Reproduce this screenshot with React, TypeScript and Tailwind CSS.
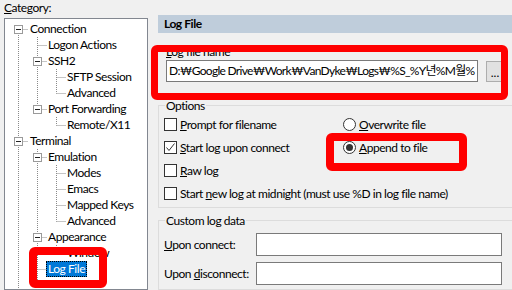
import React from "react";

// tree rows shown in the Category pane
interface TreeRow {
  label: string;
  level: number;
  box?: boolean;
  selected?: boolean;
}

const rows: TreeRow[] = [
  { label: "Connection", level: 0, box: true },
  { label: "Logon Actions", level: 1 },
  { label: "SSH2", level: 1, box: true },
  { label: "SFTP Session", level: 2 },
  { label: "Advanced", level: 2 },
  { label: "Port Forwarding", level: 1, box: true },
  { label: "Remote/X11", level: 2 },
  { label: "Terminal", level: 0, box: true },
  { label: "Emulation", level: 1, box: true },
  { label: "Modes", level: 2 },
  { label: "Emacs", level: 2 },
  { label: "Mapped Keys", level: 2 },
  { label: "Advanced", level: 2 },
  { label: "Appearance", level: 1, box: true },
  { label: "Window", level: 2 },
  { label: "Log File", level: 1, selected: true },
];

const indent = ["pl-[23px]", "pl-[41px]", "pl-[60px]"];
const lineX = [13.5, 32.5, 51.5];

function TreeLines() {
  const dots = { stroke: "#8a8a8a", strokeWidth: 1, strokeDasharray: "1 1" };
  const verticals: [number, number, number][] = [
    [lineX[0], 10, 290],
    [lineX[1], 18, 90.5],
    [lineX[1], 130, 290],
    [lineX[2], 50, 74.5],
    [lineX[2], 98, 106.5],
    [lineX[2], 146, 202.5],
    [lineX[2], 226, 234.5],
  ];
  return (
    <svg className="absolute left-0 top-0 pointer-events-none" width={142} height={290}>
      {verticals.map(([x, y1, y2], i) => (
        <line key={"v" + i} x1={x} x2={x} y1={y1} y2={y2} {...dots} />
      ))}
      {rows.map((r, i) => {
        const y = 10.5 + 16 * i;
        const x = lineX[r.level];
        return <line key={"h" + i} x1={x} x2={x + 9} y1={y} y2={y} {...dots} />;
      })}
      {rows.map((r, i) => {
        if (!r.box) return null;
        const cx = lineX[r.level] - 0.5;
        const cy = 10 + 16 * i;
        return (
          <g key={"b" + i}>
            <rect x={cx - 3.5} y={cy - 3.5} width={8} height={8} fill="#fff" stroke="#9a9a9a" />
            <line x1={cx - 2} x2={cx + 3} y1={cy + 0.5} y2={cy + 0.5} stroke="#222" />
          </g>
        );
      })}
    </svg>
  );
}

function Tree() {
  return (
    <div className="relative ml-[4px] w-[144px] h-[280px] border border-[#828790] bg-white pt-[2px]">
      <TreeLines />
      {rows.map((r, i) => (
        <div key={i} className={`relative h-[16px] flex items-center ${indent[r.level]}`}>
          <span
            className={
              r.selected
                ? "px-[1px] leading-[14px] border border-dotted border-black bg-[#0078d7] text-white"
                : "px-[1px] leading-[14px] border border-transparent"
            }
          >
            {r.label}
          </span>
        </div>
      ))}
    </div>
  );
}

function Checkbox({ checked }: { checked?: boolean }) {
  return (
    <span className="relative w-[13px] h-[13px] shrink-0 border border-[#333] bg-white">
      {checked && (
        <svg className="absolute left-0 top-0" width={11} height={11}>
          <polyline points="1.5,5.5 4,8.5 9.5,1.5" fill="none" stroke="#333" strokeWidth={1} />
        </svg>
      )}
    </span>
  );
}

function Radio({ checked }: { checked?: boolean }) {
  return (
    <span className="w-[13px] h-[13px] shrink-0 rounded-full border border-[#333] bg-white flex items-center justify-center">
      {checked && <span className="w-[7px] h-[7px] rounded-full bg-[#333]" />}
    </span>
  );
}

export default function App() {
  return (
    <div className="relative w-[512px] h-[290px] overflow-hidden flex bg-[#f0f0f0] text-[12px] tracking-[-0.45px] text-black font-['Lato','Noto_Sans_CJK_KR',sans-serif]">
      {/* left: category tree */}
      <div className="w-[158px] shrink-0 flex flex-col">
        <div className="pl-[4px] h-[19px] leading-[15px]">
          <u>C</u>ategory:
        </div>
        <Tree />
      </div>

      {/* right: log file page */}
      <div className="w-[354px] shrink-0 overflow-hidden flex flex-col pt-[15px]">
        <div className="h-[20px] bg-[#bfcddb] pl-[6px] font-bold flex items-center">Log File</div>

        <div className="pl-[8px]">
          <div className="mt-[11px] h-[15px] leading-[15px]">
            <u>L</u>og file name
          </div>
          <div className="mt-[1px] flex items-start">
            <div className="w-[312px] h-[22px] border border-[#7a7a7a] bg-white pl-[2px] overflow-hidden whitespace-nowrap leading-[20px] tracking-[-0.7px]">
              D:₩Google Drive₩Work₩VanDyke₩Logs₩%S_%Y년%M월%
            </div>
            <div className="ml-[8px] mt-[1px] w-[18px] h-[21px] border border-[#adadad] bg-[#e1e1e1] flex items-end justify-center leading-[16px] tracking-normal">
              ...
            </div>
          </div>
        </div>

        <div className="relative mt-[23px] w-[360px] border border-[#dcdcdc] pt-[7px] pb-[2px] pl-[5px]">
          <span className="absolute left-[6px] -top-[8px] px-[1px] bg-[#f0f0f0] leading-[15px]">Options</span>
          <div className="h-[23px] flex items-center">
            <div className="w-[179px] flex items-center">
              <Checkbox />
              <span className="ml-[3px]">
                <u>P</u>rompt for filename
              </span>
            </div>
            <Radio />
            <span className="ml-[3px]">
              <u>O</u>verwrite file
            </span>
          </div>
          <div className="h-[23px] flex items-center">
            <div className="w-[179px] flex items-center">
              <Checkbox checked />
              <span className="ml-[3px]">
                <u>S</u>tart log upon connect
              </span>
            </div>
            <Radio checked />
            <span className="ml-[3px]">
              <u>A</u>ppend to file
            </span>
          </div>
          <div className="h-[23px] flex items-center">
            <Checkbox />
            <span className="ml-[3px]">
              <u>R</u>aw log
            </span>
          </div>
          <div className="h-[23px] flex items-center whitespace-nowrap">
            <Checkbox />
            <span className="ml-[3px]">
              Start <u>n</u>ew log at midnight (must use %D in log file name)
            </span>
          </div>
        </div>

        <div className="relative mt-[12px] w-[360px] h-[80px] border border-[#dcdcdc] pt-[12px] pl-[5px] flex flex-col gap-[6px]">
          <span className="absolute left-[6px] -top-[8px] px-[1px] bg-[#f0f0f0] leading-[15px]">Custom log data</span>
          <div className="flex items-center">
            <span className="w-[92px]">
              <u>U</u>pon connect:
            </span>
            <div className="w-[246px] h-[23px] border border-[#7a7a7a] bg-white" />
          </div>
          <div className="flex items-center">
            <span className="w-[92px]">
              Upon <u>d</u>isconnect:
            </span>
            <div className="w-[246px] h-[23px] border border-[#7a7a7a] bg-white" />
          </div>
        </div>
      </div>

      {/* red annotation frames */}
      <div className="absolute left-[151px] top-[45px] w-[357px] h-[55px] border-[7px] border-[#ff0000] rounded-[6px]" />
      <div className="absolute left-[326px] top-[133px] w-[141px] h-[38px] border-[8px] border-[#ff0000] rounded-[6px]" />
      <div className="absolute left-[29px] top-[247px] w-[78px] h-[41px] border-[8px] border-[#ff0000] rounded-[6px]" />
    </div>
  );
}
